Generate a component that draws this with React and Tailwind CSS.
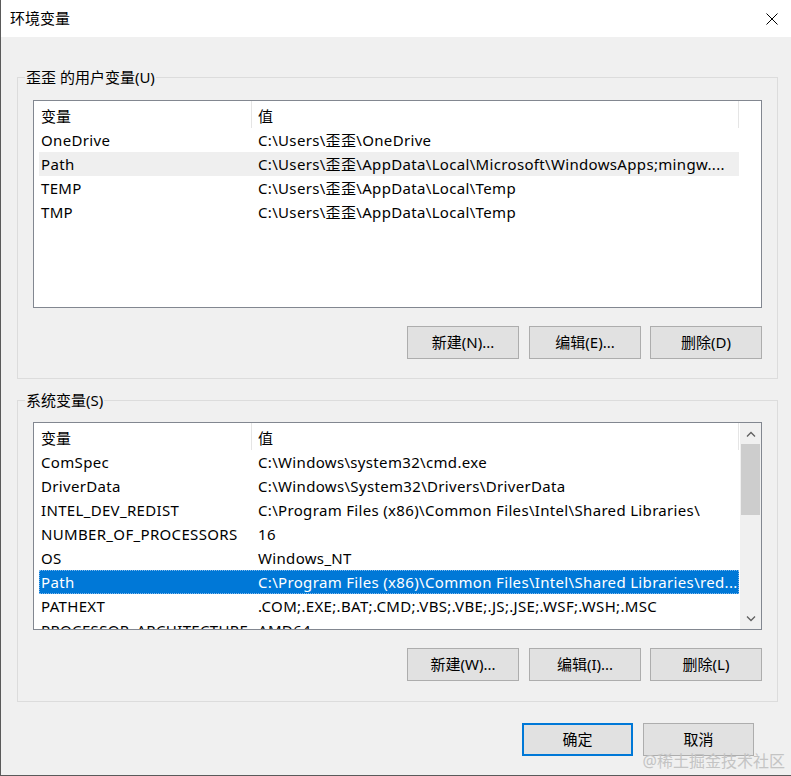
import React from 'react'

const FONT = { fontFamily: '"Noto Sans", "Noto Sans CJK SC", sans-serif' }

const userVars = [
  { name: 'OneDrive', value: 'C:\\Users\\歪歪\\OneDrive' },
  { name: 'Path', value: 'C:\\Users\\歪歪\\AppData\\Local\\Microsoft\\WindowsApps;mingw....', hover: true },
  { name: 'TEMP', value: 'C:\\Users\\歪歪\\AppData\\Local\\Temp' },
  { name: 'TMP', value: 'C:\\Users\\歪歪\\AppData\\Local\\Temp' },
]

const sysVars = [
  { name: 'ComSpec', value: 'C:\\Windows\\system32\\cmd.exe' },
  { name: 'DriverData', value: 'C:\\Windows\\System32\\Drivers\\DriverData' },
  { name: 'INTEL_DEV_REDIST', value: 'C:\\Program Files (x86)\\Common Files\\Intel\\Shared Libraries\\' },
  { name: 'NUMBER_OF_PROCESSORS', value: '16' },
  { name: 'OS', value: 'Windows_NT' },
  { name: 'Path', value: 'C:\\Program Files (x86)\\Common Files\\Intel\\Shared Libraries\\red...', selected: true },
  { name: 'PATHEXT', value: '.COM;.EXE;.BAT;.CMD;.VBS;.VBE;.JS;.JSE;.WSF;.WSH;.MSC' },
  { name: 'PROCESSOR_ARCHITECTURE', value: 'AMD64' },
]

function Btn({ children, primary, className = '' }) {
  return (
    <button
      className={`h-[33px] bg-[#e1e1e1] text-[15px] text-black ${
        primary ? 'border-2 border-[#0078d7]' : 'border border-[#adadad]'
      } ${className}`}
    >
      {children}
    </button>
  )
}

function VarList({ rows, scroll }) {
  return (
    <div className="flex h-[208px] w-[729px] overflow-hidden border border-[#828790] bg-white">
      <div className="flex-1 overflow-hidden">
        {/* 表头 */}
        <div className="ml-[5px] flex h-[27px] w-[700px] items-center pt-[3px] text-[15px]">
          <div className="w-[212px] pl-[2px]">变量</div>
          <div className="-mt-[3px] h-[27px] w-px bg-[#e5e5e5]" />
          <div className="flex-1 pl-[6px]">值</div>
          <div className="-mt-[3px] h-[27px] w-px bg-[#e5e5e5]" />
        </div>
        {rows.map((r) => (
          <div
            key={r.name}
            className={`ml-[5px] flex h-[24px] w-[700px] items-center whitespace-nowrap text-[15px] tracking-[0.33px] ${
              r.selected
                ? 'bg-[#0078d7] text-white outline-1 -outline-offset-1 outline-dotted outline-[#7fb8ec]'
                : r.hover
                  ? 'bg-[#efefef] text-black'
                  : 'text-black'
            }`}
          >
            <div className="w-[212px] shrink-0 pl-[2px]">{r.name}</div>
            <div className="overflow-hidden pl-[7px]">{r.value}</div>
          </div>
        ))}
      </div>
      {scroll && (
        <div className="flex w-[21px] shrink-0 flex-col bg-[#f0f0f0]">
          <div className="flex h-[21px] items-center justify-center">
            <svg width="10" height="6" viewBox="0 0 10 6">
              <path d="M1 5.5 L5 1.5 L9 5.5" fill="none" stroke="#606060" strokeWidth="1.3" />
            </svg>
          </div>
          <div className="mx-[1px] h-[71px] bg-[#cdcdcd]" />
          <div className="flex-1" />
          <div className="flex h-[21px] items-center justify-center">
            <svg width="10" height="6" viewBox="0 0 10 6">
              <path d="M1 0.5 L5 4.5 L9 0.5" fill="none" stroke="#606060" strokeWidth="1.3" />
            </svg>
          </div>
        </div>
      )}
    </div>
  )
}

export default function App() {
  return (
    <div
      className="relative flex h-[776px] w-[791px] flex-col overflow-hidden border-b border-l border-[#5a5a5a] bg-[#f0f0f0] text-black"
      style={FONT}
    >
      {/* 标题栏 */}
      <div className="flex h-[37px] shrink-0 items-center justify-between bg-white pl-[9px] pr-[13px]">
        <span className="text-[15px]">环境变量</span>
        <svg width="12" height="12" viewBox="0 0 12 12">
          <path d="M0.5 0.5 L11.5 11.5 M11.5 0.5 L0.5 11.5" stroke="#000" strokeWidth="1" />
        </svg>
      </div>

      <fieldset className="ml-[16px] mt-[30px] w-[761px] border border-[#dcdcdc] px-[15px] pb-[19px] pt-[13px]">
        <legend className="-ml-[8px] px-[1px] text-[15px] leading-[20px]">歪歪 的用户变量(U)</legend>
        <VarList rows={userVars} />
        <div className="mt-[18px] flex justify-end">
          <Btn className="w-[112px]">新建(N)...</Btn>
          <Btn className="ml-[10px] w-[112px]">编辑(E)...</Btn>
          <Btn className="ml-[9px] w-[112px]">删除(D)</Btn>
        </div>
      </fieldset>

      <fieldset className="ml-[16px] mt-[11px] w-[761px] border border-[#dcdcdc] px-[15px] pb-[20px] pt-[12px]">
        <legend className="-ml-[8px] px-[1px] text-[15px] leading-[20px]">系统变量(S)</legend>
        <VarList rows={sysVars} scroll />
        <div className="mt-[18px] flex justify-end">
          <Btn className="w-[112px]">新建(W)...</Btn>
          <Btn className="ml-[10px] w-[112px]">编辑(I)...</Btn>
          <Btn className="ml-[9px] w-[112px]">删除(L)</Btn>
        </div>
      </fieldset>

      <div className="mr-[37px] mt-[21px] flex justify-end gap-[10px]">
        <Btn primary className="w-[111px]">确定</Btn>
        <Btn className="w-[111px]">取消</Btn>
      </div>

      <span className="absolute bottom-[2px] right-[6px] text-[16px] text-[#c4c4c4]">@稀土掘金技术社区</span>
    </div>
  )
}
